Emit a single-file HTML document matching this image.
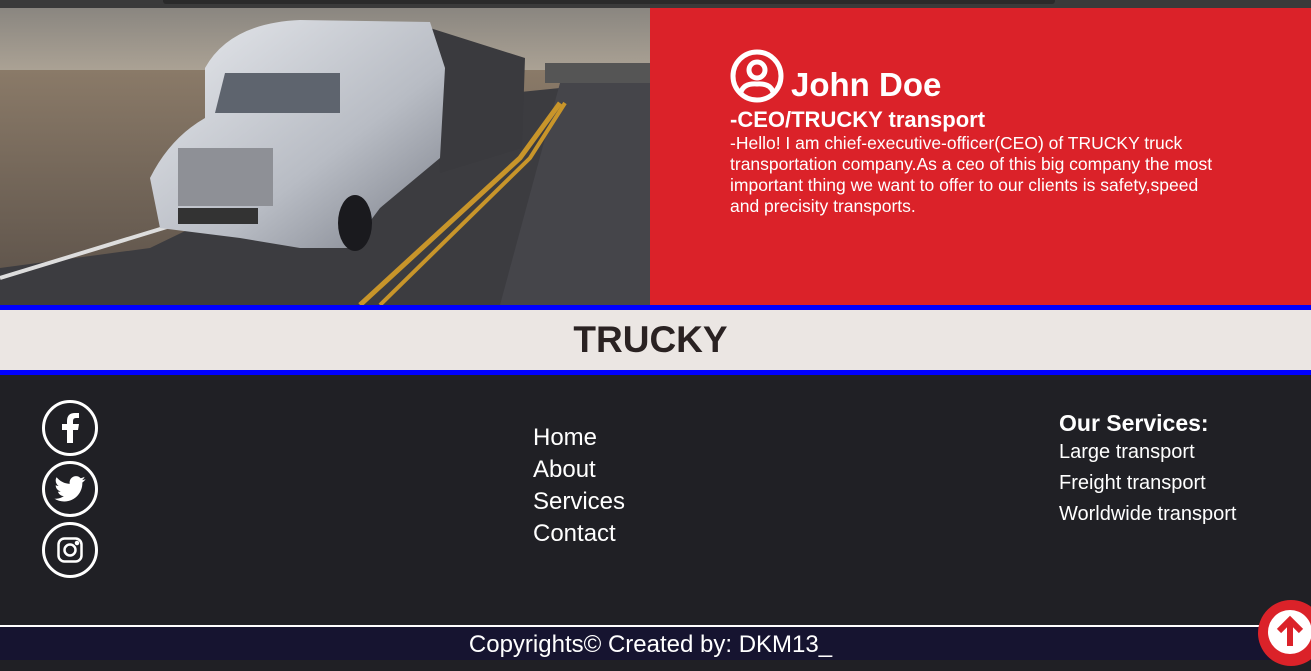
<!DOCTYPE html>
<html><head><meta charset="utf-8"><style>
*{margin:0;padding:0;box-sizing:border-box}
body{width:1311px;height:660px;overflow:hidden;background:#202025;font-family:"Liberation Sans",Arial,sans-serif;position:relative}
.top{position:absolute;left:0;top:0;width:1311px;height:8px;background:#3a3a3a}
.top div{position:absolute;left:163px;top:0;width:892px;height:4px;background:#2a2a2a;border-radius:0 0 3px 3px}
.img{position:absolute;left:0;top:8px;width:650px;height:297px;overflow:hidden}
.red{position:absolute;left:650px;top:8px;width:661px;height:297px;background:#db2229;color:#fff}
.blue1{position:absolute;left:0;top:305px;width:1311px;height:5px;background:#0000ff}
.band{position:absolute;left:0;top:310px;width:1311px;height:60px;background:#ebe6e3;text-align:center;font-weight:bold;font-size:37px;color:#2a2222;line-height:60px;text-indent:-10px}
.blue2{position:absolute;left:0;top:370px;width:1311px;height:5px;background:#0000ff}
.soc{position:absolute;left:42px;width:56px;height:56px;border:3px solid #fff;border-radius:50%;display:flex;align-items:center;justify-content:center}
.links{position:absolute;left:533px;top:422px;color:#fff;font-size:24px;line-height:32px}
.serv{position:absolute;left:1059px;top:409px;color:#fff}
.serv h3{font-size:23px;line-height:28px}
.serv p{font-size:20px;line-height:31px}
.bot{position:absolute;left:0;top:625px;width:1311px;height:35px;background:#161430;border-top:2px solid #fff;color:#fff;text-align:center;font-size:24px;line-height:36px;text-indent:-10px}
.up{position:absolute;left:1258px;top:600px;width:66px;height:66px;border-radius:50%;background:#db2229}
</style></head><body>
<div class="top"><div></div></div>
<div class="img"><svg width="650" height="297" viewBox="0 0 650 297">
<defs>
<linearGradient id="sky" x1="0" y1="0" x2="0" y2="1"><stop offset="0" stop-color="#8a8680"/><stop offset=".5" stop-color="#d8c8b0"/><stop offset="1" stop-color="#b8aa98"/></linearGradient>
<linearGradient id="des" x1="0" y1="0" x2="0" y2="1"><stop offset="0" stop-color="#8a7a68"/><stop offset="1" stop-color="#5a5048"/></linearGradient>
<linearGradient id="tr" x1="0" y1="0" x2="1" y2="1"><stop offset="0" stop-color="#e8eaee"/><stop offset=".6" stop-color="#b8bcc4"/><stop offset="1" stop-color="#7a7e88"/></linearGradient>
</defs>
<rect width="650" height="297" fill="url(#sky)"/>
<rect y="62" width="650" height="235" fill="url(#des)"/>
<polygon points="0,260 0,297 650,297 650,120 560,80 460,90 150,240" fill="#3c3c40"/>
<polygon points="560,75 650,70 650,297 500,297" fill="#45454a"/>
<polyline points="360,297 520,150 560,95" stroke="#c8952a" stroke-width="5" fill="none"/>
<polyline points="380,297 530,150 565,95" stroke="#c8952a" stroke-width="4" fill="none"/>
<polyline points="0,270 180,215" stroke="#ddd" stroke-width="4" fill="none"/>
<rect x="545" y="55" width="105" height="20" fill="#555"/>
<polygon points="430,20 525,50 522,140 440,165" fill="#3a3a3e"/>
<path d="M205,60 Q230,15 300,12 L430,14 L445,60 L440,150 L380,200 L350,240 L300,240 L240,230 L160,220 L150,170 Q170,130 205,110 Z" fill="url(#tr)"/>
<polygon points="225,65 340,65 340,105 215,105" fill="#5e646e"/>
<rect x="178" y="140" width="95" height="58" fill="#8e9096"/>
<rect x="178" y="200" width="80" height="16" fill="#333"/>
<ellipse cx="355" cy="215" rx="17" ry="28" fill="#1a1a1e"/>
</svg></div>
<div class="red">
<div style="position:absolute;left:80px;top:41px;display:flex;align-items:flex-end">
<svg width="54" height="54" viewBox="0 0 54 54" fill="none" stroke="#fff" stroke-width="5"><circle cx="27" cy="27" r="24"/><circle cx="27" cy="21" r="8"/><path d="M11,43 Q14,34 27,35 Q40,34 43,43"/></svg>
<span style="font-weight:bold;font-size:33px;margin-left:7px;line-height:40px;position:relative;top:2px">John Doe</span></div>
<div style="position:absolute;left:80px;top:99px;font-weight:bold;font-size:22px">-CEO/TRUCKY transport</div>
<div style="position:absolute;left:80px;top:125px;width:500px;font-size:17.5px;line-height:21px">-Hello! I am chief-executive-officer(CEO) of TRUCKY truck transportation company.As a ceo of this big company the most important thing we want to offer to our clients is safety,speed and precisity transports.</div>
</div>
<div class="blue1"></div>
<div class="band">TRUCKY</div>
<div class="blue2"></div>
<div class="soc" style="top:400px"><svg width="20" height="30" viewBox="0 0 20 30"><path d="M13,30 V17 H18 L19,11 H13 V8 Q13,5 16,5 H19 V0 H15 Q7,0 7,8 V11 H2 V17 H7 V30 Z" fill="#fff"/></svg></div>
<div class="soc" style="top:461px"><svg width="32" height="26" viewBox="0 0 24 20"><path d="M24,2.4 C23,2.9 22.1,3.1 21.2,3.2 22.2,2.600 22.900,1.700 23.200,0.600 22.300,1.100 21.300,1.500 20.200,1.700 19.300,0.700 18,0.100 16.600,0.100 13.900,0.100 11.700,2.300 11.700,5 11.700,5.400 11.700,5.800 11.800,6.100 7.700,5.900 4.100,4 1.700,1 1.200,1.800 1,2.600 1,3.500 1,5.200 1.800,6.700 3.200,7.600 2.400,7.600 1.600,7.400 1,7 L1,7.100 C1,9.500 2.700,11.400 4.900,11.900 4.500,12 4,12.100 3.600,12.100 3.300,12.100 3,12.100 2.700,12 3.300,14 5.100,15.400 7.300,15.400 5.600,16.700 3.500,17.500 1.200,17.500 0.800,17.500 0.400,17.500 0,17.400 2.200,18.800 4.800,19.600 7.500,19.600 16.600,19.600 21.500,12.100 21.500,5.600 L21.500,5 C22.500,4.300 23.300,3.400 24,2.400 Z" fill="#fff"/></svg></div>
<div class="soc" style="top:522px"><svg width="26" height="26" viewBox="0 0 26 26" fill="none" stroke="#fff" stroke-width="2.5"><rect x="1.5" y="1.5" width="23" height="23" rx="6"/><circle cx="13" cy="13" r="5.5"/><circle cx="20" cy="6" r="1" fill="#fff"/></svg></div>
<div class="links">Home<br>About<br>Services<br>Contact</div>
<div class="serv"><h3>Our Services:</h3><p>Large transport<br>Freight transport<br>Worldwide transport</p></div>
<div class="bot">Copyrights© Created by: DKM13_</div>
<div class="up"><svg width="66" height="66" viewBox="0 0 66 66"><circle cx="32" cy="32" r="22" fill="#fff"/><path d="M32,46 V20 M21,31 L32,20 L43,31" stroke="#db2229" stroke-width="6" fill="none"/></svg></div>
</body></html>
